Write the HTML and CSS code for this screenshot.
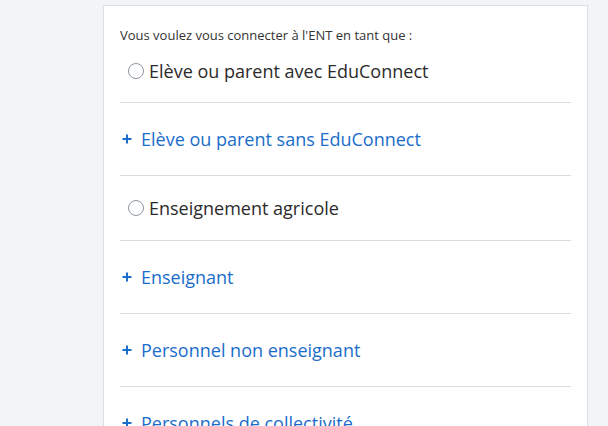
FILE: index.html
```html
<!DOCTYPE html>
<html lang="fr">
<head>
<meta charset="utf-8">
<title>Connexion ENT</title>
<link rel="stylesheet" href="styles.css">
</head>
<body>
<div class="page">
  <div class="card">
    <p class="intro">Vous voulez vous connecter à l'ENT en tant que :</p>
    <ul class="choices">
      <li class="choice radio-row first">
        <span class="radio"></span><span class="label">Elève ou parent avec EduConnect</span>
      </li>
      <li class="choice link-row">
        <svg class="plus" width="10" height="10" viewBox="0 0 10 10"><path d="M5 0.5v9M0.5 5h9" stroke="#1a6dca" stroke-width="2"/></svg><span class="link">Elève ou parent sans EduConnect</span>
      </li>
      <li class="choice radio-row">
        <span class="radio"></span><span class="label">Enseignement agricole</span>
      </li>
      <li class="choice link-row">
        <svg class="plus" width="10" height="10" viewBox="0 0 10 10"><path d="M5 0.5v9M0.5 5h9" stroke="#1a6dca" stroke-width="2"/></svg><span class="link">Enseignant</span>
      </li>
      <li class="choice link-row">
        <svg class="plus" width="10" height="10" viewBox="0 0 10 10"><path d="M5 0.5v9M0.5 5h9" stroke="#1a6dca" stroke-width="2"/></svg><span class="link">Personnel non enseignant</span>
      </li>
      <li class="choice link-row">
        <svg class="plus" width="10" height="10" viewBox="0 0 10 10"><path d="M5 0.5v9M0.5 5h9" stroke="#1a6dca" stroke-width="2"/></svg><span class="link">Personnels de collectivité</span>
      </li>
    </ul>
  </div>
</div>
</body>
</html>
```

FILE: styles.css
```css
html, body {
  margin: 0;
  padding: 0;
  background: #f3f4f6;
  font-family: "Open Sans", "Noto Sans", sans-serif;
  height: 426px;
  overflow: hidden;
}

.page {
  padding: 5px 0 0 103px;
  width: 485px;
}

.card {
  background: #ffffff;
  border: 1px solid #dcdfe3;
  border-bottom: none;
  padding: 0 16px;
  height: 500px;
}

.intro {
  margin: 0;
  padding-top: 20px;
  font-size: 13px;
  line-height: 18px;
  color: #333333;
}

.choices {
  list-style: none;
  margin: 0;
  padding: 0;
}

.choice {
  display: flex;
  align-items: center;
  font-size: 18px;
  line-height: 24px;
  border-bottom: 1px solid #d8dde2;
}

.radio-row {
  padding: 20px 0 20px 8px;
}

.radio-row.first {
  padding: 15px 0 19px 8px;
}

.link-row {
  padding: 24px 0 24px 2px;
}

.radio {
  width: 16px;
  height: 16px;
  box-sizing: border-box;
  border: 1px solid #8d969e;
  border-radius: 50%;
  margin-right: 5px;
  flex: none;
}

.label {
  color: #2b2b2b;
}

.plus {
  flex: none;
  margin-right: 9px;
}

.link {
  color: #1a6dca;
}
```
